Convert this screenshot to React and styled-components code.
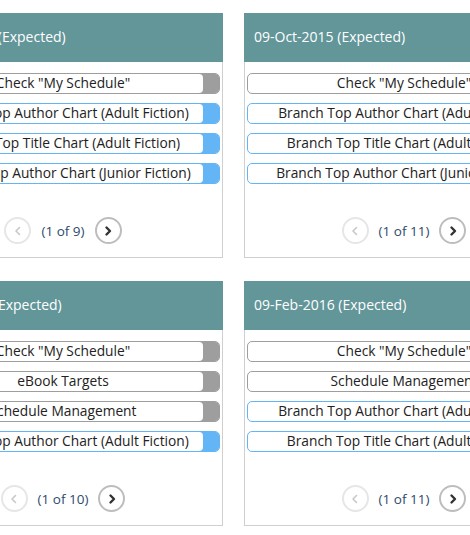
import styled, { createGlobalStyle } from "styled-components";

const GlobalStyle = createGlobalStyle`
  body {
    margin: 0;
    background: #fff;
    overflow: hidden;
    font-family: "Open Sans", "Liberation Sans", sans-serif;
  }
`;

const colors = {
  gray: "#9e9e9e",
  blue: "#64b5f6",
};

const cards = [
  {
    date: "25-Sep-2015",
    total: 9,
    items: [
      { label: 'Check "My Schedule"', kind: "gray" },
      { label: "Branch Top Author Chart (Adult Fiction)", kind: "blue" },
      { label: "Branch Top Title Chart (Adult Fiction)", kind: "blue" },
      { label: "Branch Top Author Chart (Junior Fiction)", kind: "blue" },
    ],
  },
  {
    date: "09-Oct-2015",
    total: 11,
    items: [
      { label: 'Check "My Schedule"', kind: "gray" },
      { label: "Branch Top Author Chart (Adult Fiction)", kind: "blue" },
      { label: "Branch Top Title Chart (Adult Fiction)", kind: "blue" },
      { label: "Branch Top Author Chart (Junior Fiction)", kind: "blue" },
    ],
  },
  {
    date: "22-Jan-2016",
    total: 10,
    items: [
      { label: 'Check "My Schedule"', kind: "gray" },
      { label: "eBook Targets", kind: "gray" },
      { label: "Schedule Management", kind: "gray" },
      { label: "Branch Top Author Chart (Adult Fiction)", kind: "blue" },
    ],
  },
  {
    date: "09-Feb-2016",
    total: 11,
    items: [
      { label: 'Check "My Schedule"', kind: "gray" },
      { label: "Schedule Management", kind: "gray" },
      { label: "Branch Top Author Chart (Adult Fiction)", kind: "blue" },
      { label: "Branch Top Title Chart (Adult Fiction)", kind: "blue" },
    ],
  },
];

function Chevron({ dir, active }) {
  return (
    <svg width="12" height="12" viewBox="0 0 12 12">
      <polyline
        points={dir === "left" ? "7.5,2.5 4,6 7.5,9.5" : "4.5,2.5 8,6 4.5,9.5"}
        fill="none"
        stroke={active ? "#333" : "#c8c8c8"}
        strokeWidth={active ? 2.4 : 1.6}
        strokeLinecap="round"
        strokeLinejoin="round"
      />
    </svg>
  );
}

function Card({ data }) {
  return (
    <CardBox>
      <Header>{data.date} (Expected)</Header>
      <List>
        {data.items.map((item, i) => (
          <Task key={i} color={colors[item.kind]}>
            {item.label}
          </Task>
        ))}
      </List>
      <Pager>
        <PageBtn>
          <Chevron dir="left" />
        </PageBtn>
        <PageText>(1 of {data.total})</PageText>
        <PageBtn active>
          <Chevron dir="right" active />
        </PageBtn>
      </Pager>
    </CardBox>
  );
}

export default function App() {
  return (
    <>
      <GlobalStyle />
      <Board>
        {cards.map((c, i) => (
          <Card key={i} data={c} />
        ))}
      </Board>
    </>
  );
}

const Board = styled.div`
  display: grid;
  grid-template-columns: 320px 320px;
  column-gap: 21px;
  row-gap: 23px;
  padding-top: 13px;
  margin-left: -97px;
`;

const CardBox = styled.div`
  height: 245px;
  box-sizing: border-box;
  border: 1px solid #cfcfcf;
  border-top: none;
  background: #fff;
  display: flex;
  flex-direction: column;
`;

const Header = styled.div`
  height: 49px;
  margin: 0 -1px;
  background: #629699;
  color: #fff;
  font-size: 14px;
  display: flex;
  align-items: center;
  padding: 0 0 2px 10px;
  box-sizing: border-box;
  white-space: nowrap;
`;

const List = styled.div`
  display: flex;
  flex-direction: column;
  gap: 9px;
  padding: 11px 2px 0;
`;

const Task = styled.div`
  height: 21px;
  box-sizing: border-box;
  border: 1px solid ${(p) => p.color};
  border-radius: 5px;
  box-shadow: inset -16px 0 0 ${(p) => p.color};
  font-size: 13.75px;
  line-height: 18px;
  color: #222;
  text-align: center;
  white-space: nowrap;
  overflow: hidden;
`;

const Pager = styled.div`
  margin-top: auto;
  padding-bottom: 13px;
  display: flex;
  align-items: center;
  justify-content: center;
  gap: 10px;
`;

const PageBtn = styled.div`
  width: 27px;
  height: 27px;
  box-sizing: border-box;
  border-radius: 50%;
  border: 2px solid ${(p) => (p.active ? "#bdbdbd" : "#e6e6e6")};
  display: flex;
  align-items: center;
  justify-content: center;
`;

const PageText = styled.span`
  font-size: 13.5px;
  color: #2c4a6c;
`;
